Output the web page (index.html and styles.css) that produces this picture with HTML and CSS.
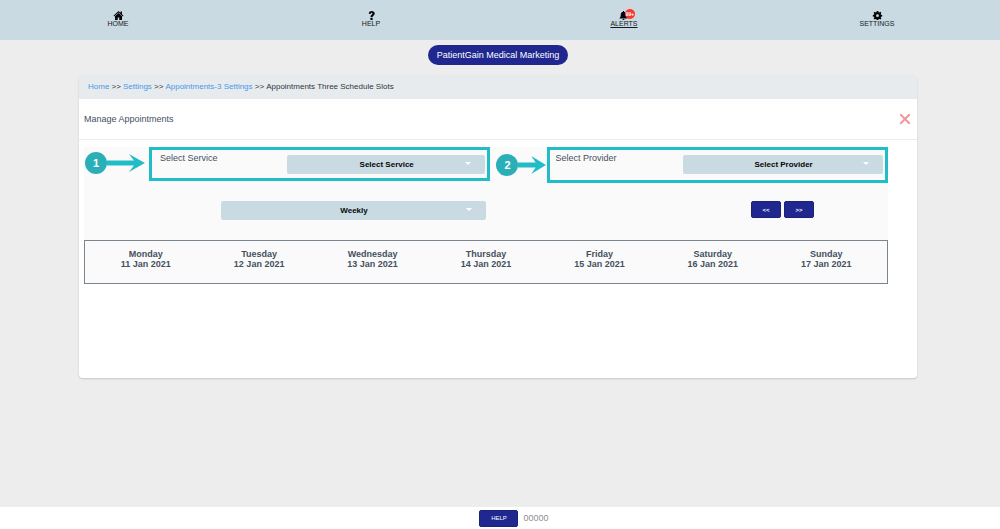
FILE: index.html
```html
<!DOCTYPE html>
<html lang="en">
<head>
<meta charset="utf-8">
<title>Manage Appointments</title>
<link rel="stylesheet" href="styles.css">
</head>
<body>
<nav class="topbar">
  <a class="nav-item" href="#home">
    <svg class="nav-icon" viewBox="0 0 20 18" aria-hidden="true"><path d="M10 0 0 9.500l1.300 1.500L10 3l8.700 8L20 9.500l-3-2.800V1h-3v2.800z"/><path d="M10 4.200 3 10.600V18h5.500v-5h3v5H17v-7.400z"/></svg>
    <span>HOME</span>
  </a>
  <a class="nav-item" href="#help">
    <svg class="nav-icon" viewBox="0 0 20 18" aria-hidden="true"><path d="M4.500 5.500C4.500 2 7 0 10.300 0S16.500 2 16.500 5c0 4-4.300 4.200-4.300 7H8c0-4.500 3.800-4.500 3.800-6.800 0-1.200-.7-1.600-1.600-1.600-1.200 0-1.700.8-1.700 2.400zM7.800 13.500h4.500V18H7.800z"/></svg>
    <span>HELP</span>
  </a>
  <a class="nav-item nav-item-active" href="#alerts">
    <svg class="nav-icon" viewBox="0 0 20 18" aria-hidden="true"><path d="M7 0h2v1.500c3.200.6 4.500 3 4.500 6 0 4 1 5.500 3 7.500h-17c2-2 3-3.500 3-7.500 0-3 1.300-5.400 4.500-6zM6 16h4c0 2.700-4 2.700-4 0z"/></svg>
    <span class="badge">99+</span>
    <span>ALERTS</span>
  </a>
  <a class="nav-item" href="#settings">
    <svg class="nav-icon" viewBox="0 0 20 18" aria-hidden="true"><path fill-rule="evenodd" d="M8.500 0h3l.6 2.300 1.500.6L15.700 1.700l2 2-1.200 2.100.6 1.500 2.300.6v3l-2.300.6-.6 1.500 1.200 2.100-2 2-2.100-1.200-1.500.6-.6 1.500h-3l-.6-1.500-1.500-.6-2.100 1.200-2-2 1.200-2.100-.6-1.500L.6 10.900v-3l2.300-.6.6-1.500-1.200-2.100 2-2 2.100 1.200 1.500-.6zM10 6.500a2.800 2.800 0 1 0 0 5.600 2.800 2.800 0 0 0 0-5.600z"/></svg>
    <span>SETTINGS</span>
  </a>
</nav>

<main class="page">
  <h1 class="pill">PatientGain Medical Marketing</h1>
  <section class="card">
    <nav class="breadcrumb" aria-label="Breadcrumb">
      <span><a href="#home">Home</a> &gt;&gt;</span>
      <span><a href="#settings">Settings</a> &gt;&gt;</span>
      <span><a href="#appointments">Appointments-3 Settings</a> &gt;&gt;</span>
      <span>Appointments Three Schedule Slots</span>
    </nav>
    <header class="card-title">
      <h2>Manage Appointments</h2>
      <button class="close" type="button" aria-label="Close">
        <svg viewBox="0 0 12 12" aria-hidden="true"><path d="m1.300 1.300 9.400 9.400m0-9.400-9.400 9.400"/></svg>
      </button>
    </header>
    <div class="panel">
      <div class="filters">
        <div class="step"><span class="step-number">1</span><svg class="arrow" viewBox="0 0 38 18" preserveAspectRatio="none" aria-hidden="true"><path d="M0 6.500h27L22 0l16 9-16 9 5-6.500H0z"/></svg></div>
        <div class="field">
          <label for="service">Select Service</label>
          <div class="select"><select id="service"><option>Select Service</option></select></div>
        </div>
        <div class="step step-second"><span class="step-number">2</span><svg class="arrow" viewBox="0 0 38 18" preserveAspectRatio="none" aria-hidden="true"><path d="M0 6.500h24L18 0l20 9-20 9 6-6.500H0z"/></svg></div>
        <div class="field field-tall">
          <label for="provider">Select Provider</label>
          <div class="select"><select id="provider"><option>Select Provider</option></select></div>
        </div>
      </div>
      <div class="controls">
        <div class="select select-wide"><select aria-label="View"><option>Weekly</option></select></div>
        <div class="pager">
          <button class="button" type="button">&lt;&lt;</button>
          <button class="button" type="button">&gt;&gt;</button>
        </div>
      </div>
      <table class="week">
        <thead>
          <tr>
            <th>Monday<br>11 Jan 2021</th>
            <th>Tuesday<br>12 Jan 2021</th>
            <th>Wednesday<br>13 Jan 2021</th>
            <th>Thursday<br>14 Jan 2021</th>
            <th>Friday<br>15 Jan 2021</th>
            <th>Saturday<br>16 Jan 2021</th>
            <th>Sunday<br>17 Jan 2021</th>
          </tr>
        </thead>
      </table>
    </div>
  </section>
</main>

<footer class="footer">
  <button class="button button-help" type="button">HELP</button>
  <span>00000</span>
</footer>
</body>
</html>
```
FILE: styles.css
```css
* {
  box-sizing: border-box;
}

body {
  margin: 0;
  min-height: 100vh;
  display: flex;
  flex-direction: column;
  background: #ededed;
  color: #455060;
  font-family: "Liberation Sans", Arial, sans-serif;
  font-size: 9px;
}

button,
select {
  font-family: inherit;
}

.topbar {
  display: flex;
  justify-content: space-between;
  height: 40px;
  padding: 11px 103px 0 98px;
  background: #c9dae2;
}

.nav-item {
  position: relative;
  display: flex;
  flex-direction: column;
  align-items: center;
  width: 40px;
  color: #15191d;
  font-size: 7px;
  line-height: 8px;
  text-decoration: none;
}

.nav-item-active {
  text-decoration: underline;
}

.nav-icon {
  width: 11px;
  height: 9px;
  overflow: visible;
  fill: #050607;
}

.badge {
  position: absolute;
  top: -2px;
  left: 21px;
  width: 10px;
  height: 10px;
  border-radius: 50%;
  background: #f8372f;
  color: #fff;
  font-size: 5px;
  font-weight: bold;
  line-height: 10px;
  text-align: center;
  display: inline-block;
}

.page {
  flex: 1;
  display: flex;
  flex-direction: column;
  align-items: center;
  gap: 10px;
  padding: 5px 83px 20px 79px;
}

.pill {
  margin: 0;
  padding: 0 9px;
  border-radius: 10px;
  background: #20288f;
  color: #fff;
  font-size: 9px;
  font-weight: normal;
  line-height: 20px;
}

.card {
  align-self: stretch;
  min-height: 303px;
  border-radius: 4px;
  background: #fff;
  box-shadow: 0 1px 2px rgba(0, 0, 0, 0.16);
}

.breadcrumb {
  display: flex;
  gap: 2px;
  padding: 0 9px;
  border-radius: 4px 4px 0 0;
  background: #e7ebee;
  color: #30363c;
  font-size: 8px;
  line-height: 24px;
}

.breadcrumb a {
  color: #4a98e8;
  text-decoration: none;
}

.card-title {
  display: flex;
  align-items: center;
  justify-content: space-between;
  height: 41px;
  padding: 0 6px 0 5px;
  border-bottom: 1px solid #ececec;
}

.card-title h2 {
  margin: 0;
  font-size: 9px;
  font-weight: normal;
}

.close {
  width: 12px;
  height: 12px;
  padding: 0;
  border: 0;
  background: none;
}

.close svg {
  display: block;
  fill: none;
  stroke: #f2969b;
  stroke-width: 2;
}

.panel {
  margin: 7px 29px 0 5px;
  background: #fafafa;
}

.filters {
  display: grid;
  grid-template-columns: 65fr 342fr 57fr 341fr;
  align-items: start;
  height: 54px;
}

.step {
  display: flex;
  align-items: center;
  min-width: 0;
  padding: 5px 4px 0 1px;
}

.step-second {
  padding: 7px 1px 0 6px;
}

.step-number {
  flex: none;
  width: 22px;
  height: 22px;
  border-radius: 50%;
  background: #2aafb8;
  color: #fff;
  font-size: 11px;
  font-weight: bold;
  line-height: 22px;
  text-align: center;
}

.arrow {
  flex: 1;
  width: 0;
  min-width: 0;
  height: 18px;
  fill: #20bcc8;
}

.field {
  display: flex;
  justify-content: space-between;
  height: 34px;
  padding: 2px 2px 0 8px;
  border: 3px solid #20bcc8;
}

.field-tall {
  height: 36px;
  padding-left: 5px;
}

.field label {
  line-height: 12px;
}

.field .select {
  width: 61%;
  margin-top: 3px;
}

.select {
  position: relative;
  height: 19px;
}

.select::after {
  content: "";
  position: absolute;
  top: 7px;
  right: 14px;
  border: 3px solid transparent;
  border-top-color: #fff;
  border-bottom: 0;
  pointer-events: none;
}

.select select {
  appearance: none;
  width: 100%;
  height: 100%;
  padding: 0 0 0 1px;
  border: 0;
  border-radius: 2px;
  background: #c9dae2;
  color: #050607;
  font-size: 8px;
  font-weight: bold;
  text-align-last: center;
}

.controls {
  display: flex;
  justify-content: space-between;
  height: 39px;
  padding: 0 74px 0 137px;
}

.select-wide {
  width: 265px;
}

.pager {
  display: flex;
  align-items: flex-start;
  gap: 3px;
}

.button {
  width: 30px;
  height: 17px;
  padding: 0;
  border: 1px solid #1a2378;
  border-radius: 2px;
  background: #20288f;
  color: #fff;
  font-size: 6px;
  font-weight: bold;
}

.week {
  width: 100%;
  height: 44px;
  padding: 0 4px;
  table-layout: fixed;
  border: 1px solid #7b858f;
  border-spacing: 0;
}

.week th {
  padding: 8px 0 0;
  line-height: 10px;
  vertical-align: top;
}

.footer {
  display: flex;
  align-items: center;
  justify-content: center;
  gap: 5px;
  height: 22px;
  padding-right: 4px;
  padding-left: 32px;
  background: #fff;
  color: #8b8f94;
}

.button-help {
  width: 39px;
  font-weight: normal;
}
```
